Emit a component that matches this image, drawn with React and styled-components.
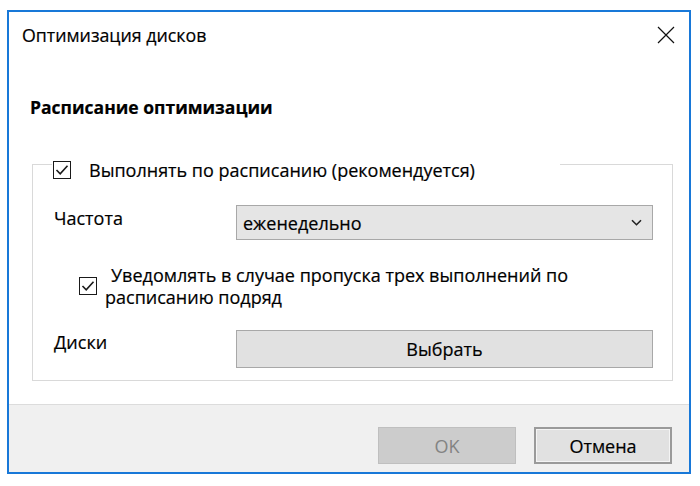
import React from 'react';
import styled, { createGlobalStyle } from 'styled-components';

const Global = createGlobalStyle`
  html, body {
    margin: 0;
    background: #ffffff;
  }
  body {
    font-family: "Open Sans", "Noto Sans", sans-serif;
    color: #000;
    -webkit-text-stroke: 0.2px #000;
  }
`;

const Page = styled.div`
  width: 700px;
  height: 486px;
  padding: 10px 0 0 7px;
  box-sizing: border-box;
`;

const Window = styled.div`
  width: 684px;
  height: 464px;
  box-sizing: border-box;
  border: 2px solid #1878d8;
  background: #fff;
  display: flex;
  flex-direction: column;
`;

const TitleBar = styled.div`
  height: 46px;
  flex: none;
  display: flex;
  align-items: center;
  justify-content: space-between;
  padding: 0 14px 0 13px;
`;

const Title = styled.div`
  font-size: 17.8px;
`;

const Main = styled.div`
  flex: 1;
  padding: 37px 16px 0 23px;
`;

const Heading = styled.div`
  font-size: 17.5px;
  font-weight: 700;
  line-height: 24px;
  margin-left: -2px;
`;

const Group = styled.fieldset`
  margin: 28px 0 0;
  padding: 0;
  border: 1px solid #d9d9d9;
  min-width: 0;
`;

const Legend = styled.legend`
  width: 508px;
  box-sizing: border-box;
  margin-left: 19px;
  padding: 12px 0 0 1px;
  display: flex;
  align-items: center;
  gap: 18px;
  font-size: 18px;
  line-height: 22px;
`;

const GroupBody = styled.div`
  padding: 24px 19px 12px 21px;
  display: flex;
  flex-direction: column;
`;

const Row = styled.div`
  display: grid;
  grid-template-columns: 182px 1fr;
  align-items: start;
`;

const Label = styled.div`
  font-size: 18px;
  line-height: 22px;
  padding-top: ${(p) => p.$offset}px;
`;

const Select = styled.div`
  height: 35px;
  box-sizing: border-box;
  border: 1px solid #a8a8a8;
  background: #e5e5e5;
  display: flex;
  align-items: center;
  justify-content: space-between;
  padding: 0 10px 0 6px;
  font-size: 18px;
`;

const Box = styled.span`
  width: 18px;
  height: 18px;
  box-sizing: border-box;
  border: 1.5px solid #1a1a1a;
  background: #fff;
  flex: none;
  display: flex;
  align-items: center;
  justify-content: center;
`;

const NotifyRow = styled.div`
  margin: 24px 0 22px 25px;
  display: flex;
  align-items: center;
  gap: 8px;
`;

const NotifyText = styled.div`
  width: 475px;
  font-size: 18px;
  line-height: 22px;
  text-indent: 6px;
`;

const Button = styled.div`
  height: ${(p) => p.$h}px;
  box-sizing: border-box;
  display: flex;
  align-items: center;
  justify-content: center;
  font-size: 18px;
  background: ${(p) => (p.$disabled ? '#cccccc' : '#e1e1e1')};
  color: ${(p) => (p.$disabled ? '#838383' : '#000')};
  -webkit-text-stroke: ${(p) => (p.$disabled ? '0' : '0.2px #000')};
  border: ${(p) =>
    p.$default ? '2px solid #9a9a9a' : p.$disabled ? '1px solid #bfbfbf' : '1px solid #a8a8a8'};
  box-shadow: ${(p) => (p.$default ? 'inset 0 0 0 1px #f4f4f4' : 'none')};
`;

const Footer = styled.div`
  height: 68px;
  flex: none;
  box-sizing: border-box;
  border-top: 1px solid #dcdcdc;
  background: #f0f0f0;
  display: flex;
  justify-content: flex-end;
  align-items: flex-start;
  gap: 18px;
  padding: 22px 17px 0 0;
`;

const FooterButton = styled(Button)`
  width: 138px;
`;

const Check = () => (
  <svg width="14" height="12" viewBox="0 0 14 12">
    <path d="M1.5 6 L5.2 9.8 L12.5 1.8" fill="none" stroke="#1a1a1a" strokeWidth="1.6" />
  </svg>
);

const Chevron = () => (
  <svg width="11" height="7" viewBox="0 0 11 7">
    <path d="M1 1.2 L5.5 5.7 L10 1.2" fill="none" stroke="#222" strokeWidth="1.6" />
  </svg>
);

const Close = () => (
  <svg width="18" height="18" viewBox="0 0 18 18">
    <path d="M1 1 L17 17 M17 1 L1 17" stroke="#111" strokeWidth="1.2" />
  </svg>
);

export default function App() {
  return (
    <Page>
      <Global />
      <Window>
        <TitleBar>
          <Title>Оптимизация дисков</Title>
          <Close />
        </TitleBar>
        <Main>
          <Heading>Расписание оптимизации</Heading>
          <Group>
            <Legend>
              <Box>
                <Check />
              </Box>
              Выполнять по расписанию (рекомендуется)
            </Legend>
            <GroupBody>
              <Row>
                <Label $offset={2}>Частота</Label>
                <Select>
                  еженедельно
                  <Chevron />
                </Select>
              </Row>
              <NotifyRow>
                <Box>
                  <Check />
                </Box>
                <NotifyText>
                  Уведомлять в случае пропуска трех выполнений по расписанию подряд
                </NotifyText>
              </NotifyRow>
              <Row>
                <Label $offset={1}>Диски</Label>
                <Button $h={38}>Выбрать</Button>
              </Row>
            </GroupBody>
          </Group>
        </Main>
        <Footer>
          <FooterButton $h={37} $disabled>
            OK
          </FooterButton>
          <FooterButton $h={37} $default>
            Отмена
          </FooterButton>
        </Footer>
      </Window>
    </Page>
  );
}
